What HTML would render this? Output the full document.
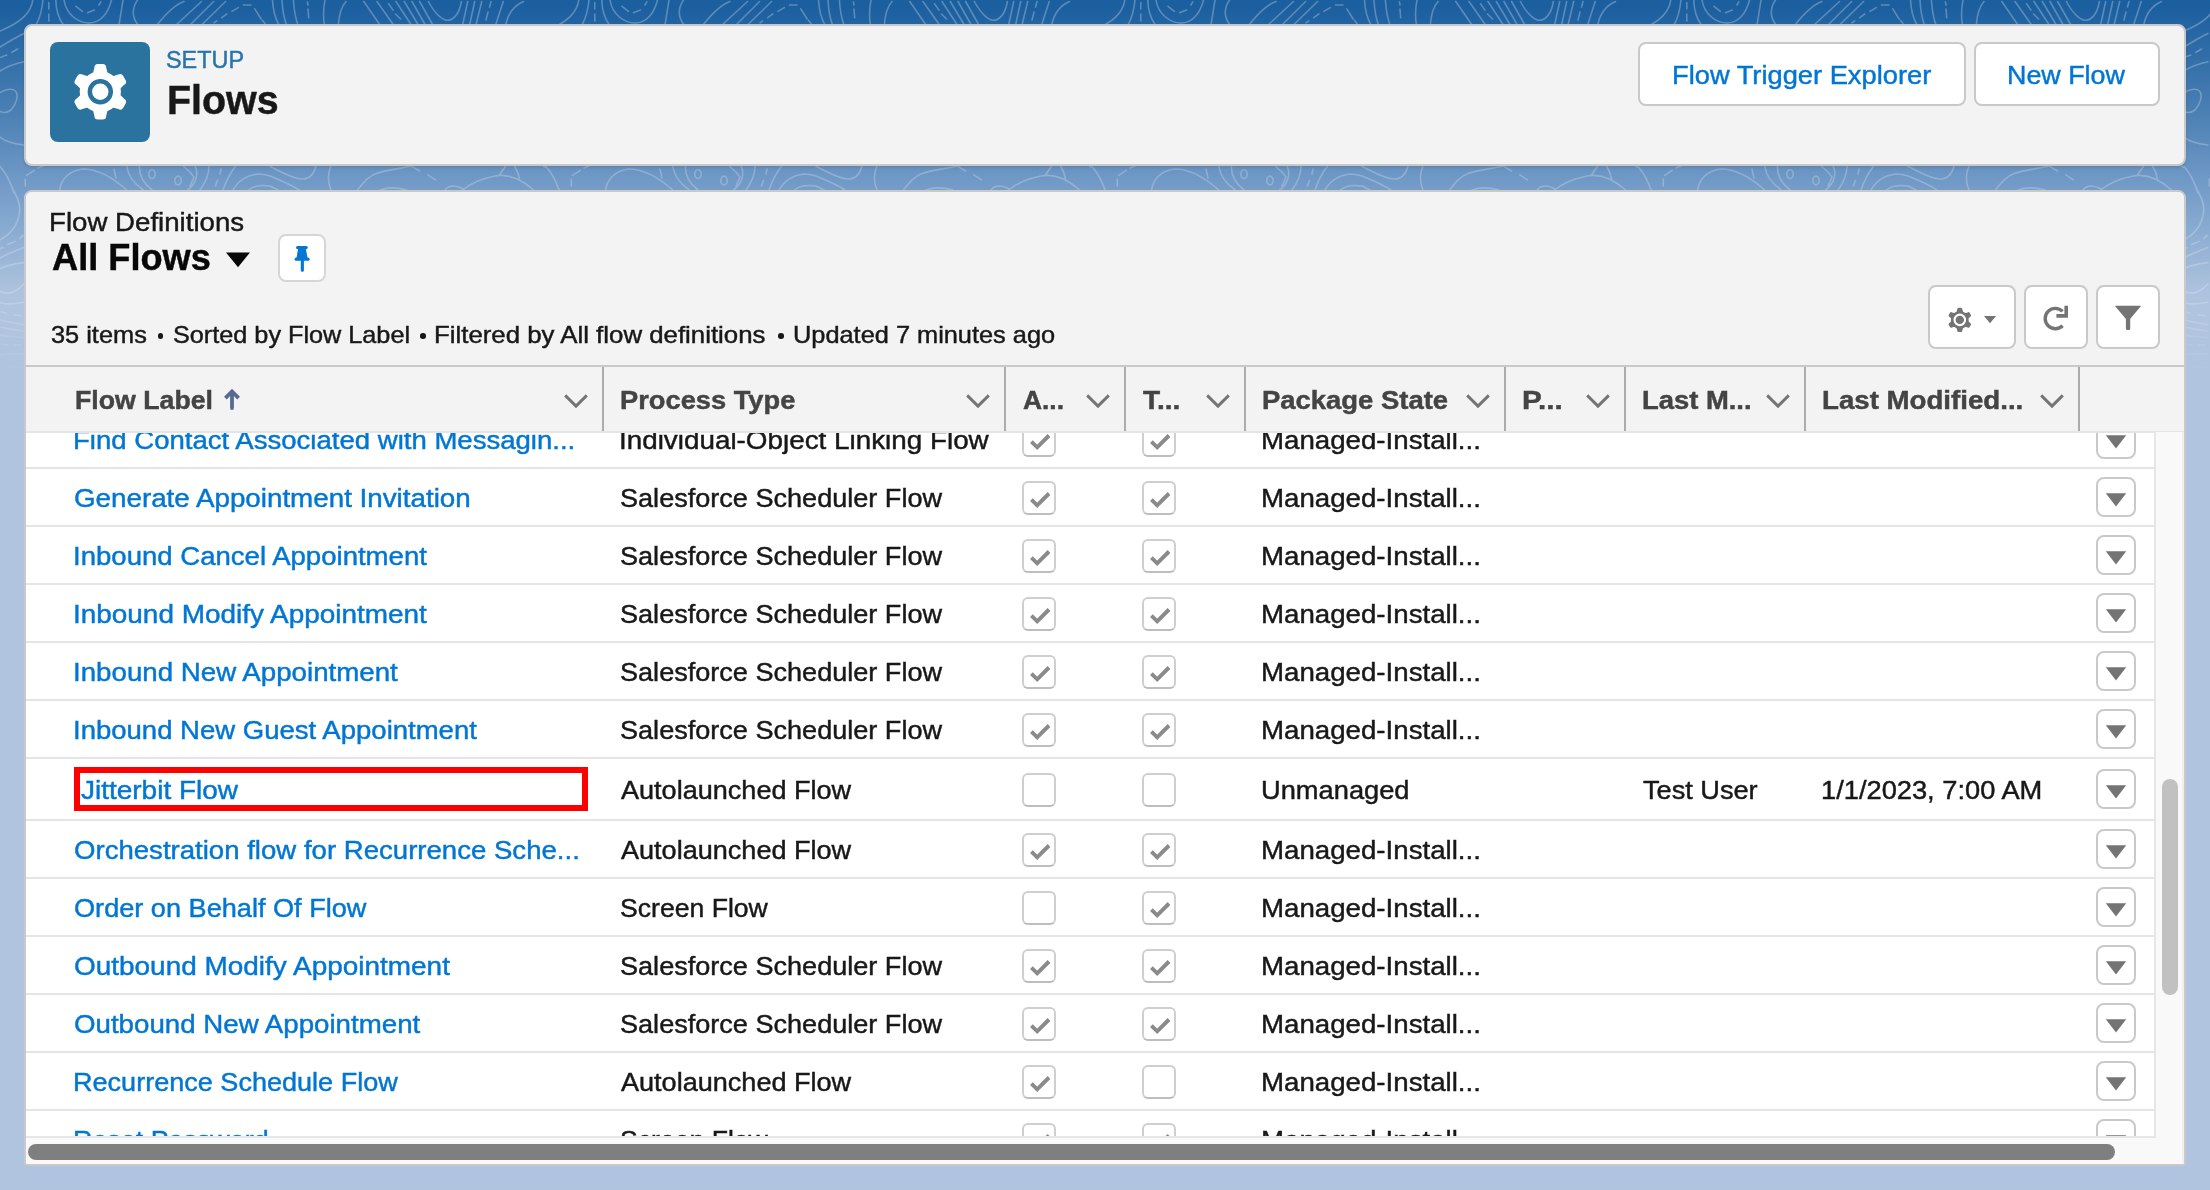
<!DOCTYPE html>
<html><head><meta charset="utf-8"><title>Flows | Setup</title>
<style>
*{box-sizing:border-box;margin:0;padding:0}
html,body{width:2210px;height:1190px;overflow:hidden}
body{position:relative;font-family:"Liberation Sans",sans-serif;background:#b0c4df linear-gradient(180deg,#1c5f9f 0px,#1c5f9f 8px,#4a7fb3 110px,#5285b7 126px,#7099c6 180px,#84a8cf 220px,#adc2de 290px,#b0c4df 310px,#b0c4df 100%) no-repeat;}
.topo{position:absolute;left:0;top:0;width:2210px;height:400px}
.card{position:absolute;left:24px;width:2162px;background:#f3f3f3;border:2px solid #c9c9c9;border-radius:8px;box-shadow:0 2px 3px rgba(0,0,0,.10)}
.tx{position:absolute;line-height:0;white-space:nowrap;transform-origin:0 0;-webkit-text-stroke:0.45px currentColor}
.btn{position:absolute;background:#fff;border:2px solid #c9c9c9;border-radius:8px}
.gearbox{position:absolute;left:50px;top:42px;width:100px;height:100px;background:#2b739f;border-radius:8px}
.thead{position:absolute;left:26px;top:365px;width:2158px;height:68px;background:#f3f3f3;border-top:2px solid #c9c9c9;border-bottom:2px solid #e5e5e5}
.dv{position:absolute;top:367px;width:2px;height:64px;background:#acacac}
.chev{position:absolute;top:393px}
.bodyclip{position:absolute;left:0;top:0;width:2210px;height:1190px;clip:rect(433px,2154px,1136px,26px)}
.tbody{position:absolute;left:26px;top:432px;width:2128px;height:704px;background:#fff}
.rl{position:absolute;left:26px;width:2128px;height:2px;background:#e5e5e5}
.cb{position:absolute;width:34px;height:34px;border:2px solid #cfcfcf;border-bottom-color:#bdbdbd;border-radius:6px;background:#fff}
.cb svg{position:absolute;left:-2px;top:-2px}
.ab{position:absolute;left:2096px;width:40px;height:40px;border:2px solid #c9c9c9;border-radius:8px;background:#fff}
.ab svg{position:absolute;left:-2px;top:-2px}
</style></head>
<body>
<svg class="topo" width="2210" height="400" viewBox="0 0 2210 400">
<defs>
<pattern id="tp" x="0" y="0" width="546" height="400" patternUnits="userSpaceOnUse"><path d="M33 -2 C32 12 22 22 0 31 M43 0 C42 10 40 18 36 25 M48.8 2.5 V9 M48.8 14 V21 M55.8 0 C56 12 59 19 63.4 25 M64 0 C66 14 78 23 89 23 C100 23 108 14 111.5 0 M76 6.3 L82.4 11.4 M87.5 12.7 L94.4 10.1 M98.9 5 L100.8 1.9 M123 0 L119 25 M137.5 0 C132 8 132 17 138 25 M184 1.5 C177 4 168 11 157 25 M201.5 1.5 L176 25 M213.6 1.5 L190 25 M225.6 1.5 L201.5 25 M214 22.8 L216.7 20.9 M221.8 17.7 L226.9 13.9 M231.9 11.4 L238.3 7.6 M243.4 5 L251 5 M254.8 8.9 L261.1 19 M262.4 20.3 L265 23.4 M272.5 0 C273 10 275 18 279 25 M282 0 C282.5 10 283.5 17 286.5 25 M293.4 0 C294 10 295 17 298 25 M307.4 2 L308 5 M308 9 L308.7 17.7 M325 0 C323 10 323 17 324.5 25 M346 1.5 C342 6 339 14 338.4 25 M363.8 1.5 L380 25 M377 1.5 L393.6 25 M388.5 3.8 L393 10.1 M395.5 14 L400.5 19 M396 1.5 L411.3 25 M404.3 1.5 L418.3 25 M412 1.5 L425.3 25 M419.6 1.5 L432.9 25 M428.4 1.5 C436 16 444 20.3 447.4 20.3 C452 20.3 459 16 461.4 1.5 M467.7 1.5 L462.6 25 M474.7 1.5 L469.6 25 M481.7 1.5 L476 25 M491 1.5 L489.5 7 M488 12 L486 20 M503.2 1.5 L495.6 25 M523.5 1.5 C513 6 508 14 505.7 25 M0 166.5 C5 172 10 180 14 193 M26.6 175.4 L34.2 170.3 M38 168 L43 166 M25.3 179 V186 M59.6 190 C61 180 68 171 82.4 169 C95 169 110 175 126.7 190 M114 169 L116 178 M126.7 166 C128 175 133 183 143.2 190 M139.4 166 C139 175 143 183 152 190 M148.8 174.1 A3.2 4.4 0 1 0 155.2 174.1 A3.2 4.4 0 1 0 148.8 174.1 M174.8 180.5 A3.2 4.4 0 1 0 181.2 180.5 A3.2 4.4 0 1 0 174.8 180.5 M183.8 166.5 L190 172 L194 177 L190 186 M195 166 C198 172 198 182 187.6 190 M209 166 C209 175 206 182 200 190 M221 169 L220 174 M217.4 180.5 L215.5 186 M235.7 166 C231 172 226 181 223 190 M233 190 C238 181 247 175.4 258 174 C263 174 267 175 270 176 M248.4 190 C252 187 258 185.5 263 185.5 C266 185.5 268 185.7 270 186 M270 166.5 C278 170 292 179 302 179 C309 179 314 174 316 166 M270 176 C280 180 290 184 299 190 M270 186 L278 190 M331 166 C327.5 174 327.5 182 331 190 M357.5 190 C362 184 367 177 375 174 C385 170 397 169 412 166 M412 166.5 L419.6 171 M427.8 174.8 L435.4 179.8 M380 190 C388 187 396 187 407 190 M445 190 C447 187 451 186 454 186 C458 186 461 188 463 189 M462.6 190 C470 184 480 179 495 176 C505 174 518 176 533.6 190 M499.4 175 L505.7 166 M514.6 166 C517 170 519 175 519.7 180 M543.8 166.5 L550 169 M0 47 C8 42 16 37 24 33.4 M0 57.6 L6.7 55 M12 52.3 L17.5 49 M0 71 C6 67 13 64 24 61.7 M0 92.6 C5 90 12 88 15.5 91 C19 95 16 105 11 110 C7 113 3 113 0 111.4 M0 137 C3 140 8 143 24 145 M12.1 188 C17 196 20 205 19.7 210 C19 222 14 232 0 240 M0 249 L3 247.5 M7.6 244.5 L15 241.4 M19.7 238.4 L23.4 235.4 M0 258 C5 255 12 252 24 247.5 M0 268.7 C5 266 12 264 24 262.6 M0 291.4 C4 293 9 294 13 292 C18 290 21 287 24 283.8 M0 302.7 C5 304 12 305 24 302 M1.5 311.8 L6 313.3 M13.6 314.8 L20.4 315.6 M0 320 C5 321 12 323 24 324.6 M0 327 C5 328 12 330 24 330.7 M0 335 C5 336 12 336.7 24 337.5 M1.5 344.3 L7.6 345 M14.4 345 L21 345 M0 355 C5 354 12 353.4 24 354 M7.6 367 L24 367.7" fill="none" stroke="#fff" stroke-width="1.6" stroke-linecap="round"/></pattern>
<linearGradient id="tg" x1="0" y1="0" x2="0" y2="1"><stop offset="0" stop-color="#fff" stop-opacity="1"/><stop offset="0.75" stop-color="#fff" stop-opacity="0.75"/><stop offset="0.95" stop-color="#fff" stop-opacity="0"/></linearGradient>
<mask id="tm"><rect width="2210" height="400" fill="url(#tg)"/></mask>
</defs>
<rect width="2210" height="400" fill="url(#tp)" opacity="0.27" mask="url(#tm)"/>
</svg>

<div class="card" style="top:24px;height:142px"></div>
<div class="gearbox"><svg width="100" height="100" viewBox="0 0 100 100"><circle cx="50.3" cy="49.8" r="20.60" fill="#fff"/><path d="M42.70 32.80 L44.40 25.60 Q44.40 22.00 48.00 22.00 L52.60 22.00 Q56.20 22.00 56.20 25.60 L57.90 32.80 Z" fill="#fff" transform="rotate(0 50.3 49.8)"/><path d="M42.70 32.80 L44.40 25.60 Q44.40 22.00 48.00 22.00 L52.60 22.00 Q56.20 22.00 56.20 25.60 L57.90 32.80 Z" fill="#fff" transform="rotate(60 50.3 49.8)"/><path d="M42.70 32.80 L44.40 25.60 Q44.40 22.00 48.00 22.00 L52.60 22.00 Q56.20 22.00 56.20 25.60 L57.90 32.80 Z" fill="#fff" transform="rotate(120 50.3 49.8)"/><path d="M42.70 32.80 L44.40 25.60 Q44.40 22.00 48.00 22.00 L52.60 22.00 Q56.20 22.00 56.20 25.60 L57.90 32.80 Z" fill="#fff" transform="rotate(180 50.3 49.8)"/><path d="M42.70 32.80 L44.40 25.60 Q44.40 22.00 48.00 22.00 L52.60 22.00 Q56.20 22.00 56.20 25.60 L57.90 32.80 Z" fill="#fff" transform="rotate(240 50.3 49.8)"/><path d="M42.70 32.80 L44.40 25.60 Q44.40 22.00 48.00 22.00 L52.60 22.00 Q56.20 22.00 56.20 25.60 L57.90 32.80 Z" fill="#fff" transform="rotate(300 50.3 49.8)"/><circle cx="50.3" cy="49.8" r="12.70" fill="#2b739f"/><circle cx="50.3" cy="49.8" r="8.20" fill="#fff"/></svg></div>
<div class="btn" style="left:1638px;top:42px;width:328px;height:64px"></div>
<div class="btn" style="left:1974px;top:42px;width:186px;height:64px"></div>

<div class="card" style="top:190px;height:976px;background:#f9f9f9;border-radius:8px 8px 3px 3px;box-shadow:none"></div>
<div style="position:absolute;left:26px;top:192px;width:2158px;height:173px;background:#f3f3f3;border-radius:6px 6px 0 0"></div>
<div class="btn" style="left:278px;top:234px;width:48px;height:48px;border-color:#d8d6d4"></div>
<svg style="position:absolute;left:226px;top:252px" width="24" height="16" viewBox="0 0 24 16"><path d="M0 0.5 H24 L12 15.2 Z" fill="#080808"/></svg>
<svg style="position:absolute;left:290px;top:244px" width="24" height="30" viewBox="0 0 24 30"><g fill="#0176d3"><rect x="6" y="2" width="11.8" height="3.2" rx="1.6"/><path d="M8.2 4.5 H15.8 L17.6 14 H6.5 Z"/><rect x="4.6" y="13.6" width="15" height="3.2" rx="1.6"/><rect x="10.8" y="15" width="3.1" height="12.8" rx="1.55"/></g></svg>

<div class="btn" style="left:1928px;top:285px;width:88px;height:64px"></div>
<div class="btn" style="left:2024px;top:285px;width:64px;height:64px"></div>
<div class="btn" style="left:2096px;top:285px;width:64px;height:64px"></div>
<svg style="position:absolute;left:0;top:0" width="2210" height="400" viewBox="0 0 2210 400">
<circle cx="1959.8" cy="319.9" r="8.97" fill="#747474"/><path d="M1956.49 312.50 L1957.23 309.37 Q1957.23 307.80 1958.80 307.80 L1960.80 307.80 Q1962.37 307.80 1962.37 309.37 L1963.11 312.50 Z" fill="#747474" transform="rotate(0 1959.8 319.9)"/><path d="M1956.49 312.50 L1957.23 309.37 Q1957.23 307.80 1958.80 307.80 L1960.80 307.80 Q1962.37 307.80 1962.37 309.37 L1963.11 312.50 Z" fill="#747474" transform="rotate(60 1959.8 319.9)"/><path d="M1956.49 312.50 L1957.23 309.37 Q1957.23 307.80 1958.80 307.80 L1960.80 307.80 Q1962.37 307.80 1962.37 309.37 L1963.11 312.50 Z" fill="#747474" transform="rotate(120 1959.8 319.9)"/><path d="M1956.49 312.50 L1957.23 309.37 Q1957.23 307.80 1958.80 307.80 L1960.80 307.80 Q1962.37 307.80 1962.37 309.37 L1963.11 312.50 Z" fill="#747474" transform="rotate(180 1959.8 319.9)"/><path d="M1956.49 312.50 L1957.23 309.37 Q1957.23 307.80 1958.80 307.80 L1960.80 307.80 Q1962.37 307.80 1962.37 309.37 L1963.11 312.50 Z" fill="#747474" transform="rotate(240 1959.8 319.9)"/><path d="M1956.49 312.50 L1957.23 309.37 Q1957.23 307.80 1958.80 307.80 L1960.80 307.80 Q1962.37 307.80 1962.37 309.37 L1963.11 312.50 Z" fill="#747474" transform="rotate(300 1959.8 319.9)"/><circle cx="1959.8" cy="319.9" r="6.30" fill="#fff"/><circle cx="1959.8" cy="319.9" r="4.20" fill="#747474"/>
<path d="M1984 316 H1996 L1990 323.2 Z" fill="#747474"/>
<path d="M2062.6 311.4 A10.2 10.2 0 1 0 2062.6 325.8" fill="none" stroke="#747474" stroke-width="3.4"/>
<path d="M2056.4 315.9 H2066.2 V305.8" fill="none" stroke="#747474" stroke-width="3.6"/>
<path d="M2114.8 305.7 H2141.2 L2128 321.6 Z" fill="#747474"/>
<rect x="2125.9" y="314" width="4.3" height="16" rx="1.5" fill="#747474"/>
</svg>

<div class="thead"></div>
<div class="dv" style="left:602px"></div><div class="dv" style="left:1004px"></div><div class="dv" style="left:1124px"></div><div class="dv" style="left:1244px"></div><div class="dv" style="left:1504px"></div><div class="dv" style="left:1624px"></div><div class="dv" style="left:1804px"></div><div class="dv" style="left:2078px"></div>
<svg class="chev" style="left:564px" width="24" height="16" viewBox="0 0 24 16"><path d="M1.2 2.4 L12 13.1 L22.8 2.4" fill="none" stroke="#747474" stroke-width="2.9"/></svg><svg class="chev" style="left:966px" width="24" height="16" viewBox="0 0 24 16"><path d="M1.2 2.4 L12 13.1 L22.8 2.4" fill="none" stroke="#747474" stroke-width="2.9"/></svg><svg class="chev" style="left:1086px" width="24" height="16" viewBox="0 0 24 16"><path d="M1.2 2.4 L12 13.1 L22.8 2.4" fill="none" stroke="#747474" stroke-width="2.9"/></svg><svg class="chev" style="left:1206px" width="24" height="16" viewBox="0 0 24 16"><path d="M1.2 2.4 L12 13.1 L22.8 2.4" fill="none" stroke="#747474" stroke-width="2.9"/></svg><svg class="chev" style="left:1466px" width="24" height="16" viewBox="0 0 24 16"><path d="M1.2 2.4 L12 13.1 L22.8 2.4" fill="none" stroke="#747474" stroke-width="2.9"/></svg><svg class="chev" style="left:1586px" width="24" height="16" viewBox="0 0 24 16"><path d="M1.2 2.4 L12 13.1 L22.8 2.4" fill="none" stroke="#747474" stroke-width="2.9"/></svg><svg class="chev" style="left:1766px" width="24" height="16" viewBox="0 0 24 16"><path d="M1.2 2.4 L12 13.1 L22.8 2.4" fill="none" stroke="#747474" stroke-width="2.9"/></svg><svg class="chev" style="left:2040px" width="24" height="16" viewBox="0 0 24 16"><path d="M1.2 2.4 L12 13.1 L22.8 2.4" fill="none" stroke="#747474" stroke-width="2.9"/></svg>
<svg style="position:absolute;left:0;top:0" width="300" height="420" viewBox="0 0 300 420"><path d="M232 393 V408" stroke="#566a93" stroke-width="3.8" stroke-linecap="round"/><path d="M225.4 398.1 L232 391.5 L238.6 398.1" fill="none" stroke="#566a93" stroke-width="3.8" stroke-linejoin="miter"/></svg>

<div class="bodyclip">
<div class="tbody"></div>
<div class="rl" style="top:467px"></div><div class="rl" style="top:525px"></div><div class="rl" style="top:583px"></div><div class="rl" style="top:641px"></div><div class="rl" style="top:699px"></div><div class="rl" style="top:757px"></div><div class="rl" style="top:819px"></div><div class="rl" style="top:877px"></div><div class="rl" style="top:935px"></div><div class="rl" style="top:993px"></div><div class="rl" style="top:1051px"></div><div class="rl" style="top:1109px"></div>
<span class="tx" style="left:72.88px;top:439.70px;font-size:26px;font-weight:400;color:#0176d3;transform:scaleX(1.0596)">Find Contact Associated with Messagin...</span>
<span class="tx" style="left:619.06px;top:439.70px;font-size:26px;font-weight:400;color:#181818;transform:scaleX(1.0704)">Individual-Object Linking Flow</span>
<span class="tx" style="left:1261.17px;top:439.70px;font-size:26px;font-weight:400;color:#181818;transform:scaleX(1.0640)">Managed-Install...</span>
<span class="tx" style="left:73.93px;top:497.70px;font-size:26px;font-weight:400;color:#0176d3;transform:scaleX(1.0679)">Generate Appointment Invitation</span>
<span class="tx" style="left:620.16px;top:497.70px;font-size:26px;font-weight:400;color:#181818;transform:scaleX(1.0412)">Salesforce Scheduler Flow</span>
<span class="tx" style="left:1261.17px;top:497.70px;font-size:26px;font-weight:400;color:#181818;transform:scaleX(1.0640)">Managed-Install...</span>
<span class="tx" style="left:72.88px;top:555.70px;font-size:26px;font-weight:400;color:#0176d3;transform:scaleX(1.0598)">Inbound Cancel Appointment</span>
<span class="tx" style="left:620.16px;top:555.70px;font-size:26px;font-weight:400;color:#181818;transform:scaleX(1.0412)">Salesforce Scheduler Flow</span>
<span class="tx" style="left:1261.17px;top:555.70px;font-size:26px;font-weight:400;color:#181818;transform:scaleX(1.0640)">Managed-Install...</span>
<span class="tx" style="left:72.85px;top:613.70px;font-size:26px;font-weight:400;color:#0176d3;transform:scaleX(1.0738)">Inbound Modify Appointment</span>
<span class="tx" style="left:620.16px;top:613.70px;font-size:26px;font-weight:400;color:#181818;transform:scaleX(1.0412)">Salesforce Scheduler Flow</span>
<span class="tx" style="left:1261.17px;top:613.70px;font-size:26px;font-weight:400;color:#181818;transform:scaleX(1.0640)">Managed-Install...</span>
<span class="tx" style="left:72.87px;top:671.70px;font-size:26px;font-weight:400;color:#0176d3;transform:scaleX(1.0649)">Inbound New Appointment</span>
<span class="tx" style="left:620.16px;top:671.70px;font-size:26px;font-weight:400;color:#181818;transform:scaleX(1.0412)">Salesforce Scheduler Flow</span>
<span class="tx" style="left:1261.17px;top:671.70px;font-size:26px;font-weight:400;color:#181818;transform:scaleX(1.0640)">Managed-Install...</span>
<span class="tx" style="left:72.88px;top:729.70px;font-size:26px;font-weight:400;color:#0176d3;transform:scaleX(1.0584)">Inbound New Guest Appointment</span>
<span class="tx" style="left:620.16px;top:729.70px;font-size:26px;font-weight:400;color:#181818;transform:scaleX(1.0412)">Salesforce Scheduler Flow</span>
<span class="tx" style="left:1261.17px;top:729.70px;font-size:26px;font-weight:400;color:#181818;transform:scaleX(1.0640)">Managed-Install...</span>
<span class="tx" style="left:81.00px;top:789.70px;font-size:26px;font-weight:400;color:#0176d3;transform:scaleX(1.0757)">Jitterbit Flow</span>
<span class="tx" style="left:621.20px;top:789.70px;font-size:26px;font-weight:400;color:#181818;transform:scaleX(1.0408)">Autolaunched Flow</span>
<span class="tx" style="left:1261.20px;top:789.70px;font-size:26px;font-weight:400;color:#181818;transform:scaleX(1.0485)">Unmanaged</span>
<span class="tx" style="left:1643.00px;top:789.70px;font-size:26px;font-weight:400;color:#181818;transform:scaleX(1.0441)">Test User</span>
<span class="tx" style="left:1821.15px;top:789.70px;font-size:26px;font-weight:400;color:#181818;transform:scaleX(1.0485)">1/1/2023, 7:00 AM</span>
<span class="tx" style="left:73.94px;top:849.70px;font-size:26px;font-weight:400;color:#0176d3;transform:scaleX(1.0607)">Orchestration flow for Recurrence Sche...</span>
<span class="tx" style="left:621.20px;top:849.70px;font-size:26px;font-weight:400;color:#181818;transform:scaleX(1.0408)">Autolaunched Flow</span>
<span class="tx" style="left:1261.17px;top:849.70px;font-size:26px;font-weight:400;color:#181818;transform:scaleX(1.0640)">Managed-Install...</span>
<span class="tx" style="left:73.96px;top:907.70px;font-size:26px;font-weight:400;color:#0176d3;transform:scaleX(1.0431)">Order on Behalf Of Flow</span>
<span class="tx" style="left:620.18px;top:907.70px;font-size:26px;font-weight:400;color:#181818;transform:scaleX(1.0228)">Screen Flow</span>
<span class="tx" style="left:1261.17px;top:907.70px;font-size:26px;font-weight:400;color:#181818;transform:scaleX(1.0640)">Managed-Install...</span>
<span class="tx" style="left:73.93px;top:965.70px;font-size:26px;font-weight:400;color:#0176d3;transform:scaleX(1.0747)">Outbound Modify Appointment</span>
<span class="tx" style="left:620.16px;top:965.70px;font-size:26px;font-weight:400;color:#181818;transform:scaleX(1.0412)">Salesforce Scheduler Flow</span>
<span class="tx" style="left:1261.17px;top:965.70px;font-size:26px;font-weight:400;color:#181818;transform:scaleX(1.0640)">Managed-Install...</span>
<span class="tx" style="left:73.94px;top:1023.70px;font-size:26px;font-weight:400;color:#0176d3;transform:scaleX(1.0646)">Outbound New Appointment</span>
<span class="tx" style="left:620.16px;top:1023.70px;font-size:26px;font-weight:400;color:#181818;transform:scaleX(1.0412)">Salesforce Scheduler Flow</span>
<span class="tx" style="left:1261.17px;top:1023.70px;font-size:26px;font-weight:400;color:#181818;transform:scaleX(1.0640)">Managed-Install...</span>
<span class="tx" style="left:72.92px;top:1081.70px;font-size:26px;font-weight:400;color:#0176d3;transform:scaleX(1.0404)">Recurrence Schedule Flow</span>
<span class="tx" style="left:621.20px;top:1081.70px;font-size:26px;font-weight:400;color:#181818;transform:scaleX(1.0408)">Autolaunched Flow</span>
<span class="tx" style="left:1261.17px;top:1081.70px;font-size:26px;font-weight:400;color:#181818;transform:scaleX(1.0640)">Managed-Install...</span>
<span class="tx" style="left:72.93px;top:1139.70px;font-size:26px;font-weight:400;color:#0176d3;transform:scaleX(1.0331)">Reset Password</span>
<span class="tx" style="left:620.18px;top:1139.70px;font-size:26px;font-weight:400;color:#181818;transform:scaleX(1.0228)">Screen Flow</span>
<span class="tx" style="left:1261.17px;top:1139.70px;font-size:26px;font-weight:400;color:#181818;transform:scaleX(1.0640)">Managed-Install...</span>
<div class="cb" style="left:1022px;top:423.3px"><svg width="34" height="34" viewBox="0 0 34 34"><path d="M9.4 18.6 L15.2 24.3 L27 12.5" fill="none" stroke="#8a8a8a" stroke-width="3.9" stroke-linecap="butt" stroke-linejoin="miter"/></svg></div>
<div class="cb" style="left:1142px;top:423.3px"><svg width="34" height="34" viewBox="0 0 34 34"><path d="M9.4 18.6 L15.2 24.3 L27 12.5" fill="none" stroke="#8a8a8a" stroke-width="3.9" stroke-linecap="butt" stroke-linejoin="miter"/></svg></div>
<div class="ab" style="top:419.0px"><svg width="40" height="40" viewBox="0 0 40 40"><path d="M9.8 16.2 H30.2 L20 29.4 Z" fill="#747474"/></svg></div>
<div class="cb" style="left:1022px;top:481.3px"><svg width="34" height="34" viewBox="0 0 34 34"><path d="M9.4 18.6 L15.2 24.3 L27 12.5" fill="none" stroke="#8a8a8a" stroke-width="3.9" stroke-linecap="butt" stroke-linejoin="miter"/></svg></div>
<div class="cb" style="left:1142px;top:481.3px"><svg width="34" height="34" viewBox="0 0 34 34"><path d="M9.4 18.6 L15.2 24.3 L27 12.5" fill="none" stroke="#8a8a8a" stroke-width="3.9" stroke-linecap="butt" stroke-linejoin="miter"/></svg></div>
<div class="ab" style="top:477.0px"><svg width="40" height="40" viewBox="0 0 40 40"><path d="M9.8 16.2 H30.2 L20 29.4 Z" fill="#747474"/></svg></div>
<div class="cb" style="left:1022px;top:539.3px"><svg width="34" height="34" viewBox="0 0 34 34"><path d="M9.4 18.6 L15.2 24.3 L27 12.5" fill="none" stroke="#8a8a8a" stroke-width="3.9" stroke-linecap="butt" stroke-linejoin="miter"/></svg></div>
<div class="cb" style="left:1142px;top:539.3px"><svg width="34" height="34" viewBox="0 0 34 34"><path d="M9.4 18.6 L15.2 24.3 L27 12.5" fill="none" stroke="#8a8a8a" stroke-width="3.9" stroke-linecap="butt" stroke-linejoin="miter"/></svg></div>
<div class="ab" style="top:535.0px"><svg width="40" height="40" viewBox="0 0 40 40"><path d="M9.8 16.2 H30.2 L20 29.4 Z" fill="#747474"/></svg></div>
<div class="cb" style="left:1022px;top:597.3px"><svg width="34" height="34" viewBox="0 0 34 34"><path d="M9.4 18.6 L15.2 24.3 L27 12.5" fill="none" stroke="#8a8a8a" stroke-width="3.9" stroke-linecap="butt" stroke-linejoin="miter"/></svg></div>
<div class="cb" style="left:1142px;top:597.3px"><svg width="34" height="34" viewBox="0 0 34 34"><path d="M9.4 18.6 L15.2 24.3 L27 12.5" fill="none" stroke="#8a8a8a" stroke-width="3.9" stroke-linecap="butt" stroke-linejoin="miter"/></svg></div>
<div class="ab" style="top:593.0px"><svg width="40" height="40" viewBox="0 0 40 40"><path d="M9.8 16.2 H30.2 L20 29.4 Z" fill="#747474"/></svg></div>
<div class="cb" style="left:1022px;top:655.3px"><svg width="34" height="34" viewBox="0 0 34 34"><path d="M9.4 18.6 L15.2 24.3 L27 12.5" fill="none" stroke="#8a8a8a" stroke-width="3.9" stroke-linecap="butt" stroke-linejoin="miter"/></svg></div>
<div class="cb" style="left:1142px;top:655.3px"><svg width="34" height="34" viewBox="0 0 34 34"><path d="M9.4 18.6 L15.2 24.3 L27 12.5" fill="none" stroke="#8a8a8a" stroke-width="3.9" stroke-linecap="butt" stroke-linejoin="miter"/></svg></div>
<div class="ab" style="top:651.0px"><svg width="40" height="40" viewBox="0 0 40 40"><path d="M9.8 16.2 H30.2 L20 29.4 Z" fill="#747474"/></svg></div>
<div class="cb" style="left:1022px;top:713.3px"><svg width="34" height="34" viewBox="0 0 34 34"><path d="M9.4 18.6 L15.2 24.3 L27 12.5" fill="none" stroke="#8a8a8a" stroke-width="3.9" stroke-linecap="butt" stroke-linejoin="miter"/></svg></div>
<div class="cb" style="left:1142px;top:713.3px"><svg width="34" height="34" viewBox="0 0 34 34"><path d="M9.4 18.6 L15.2 24.3 L27 12.5" fill="none" stroke="#8a8a8a" stroke-width="3.9" stroke-linecap="butt" stroke-linejoin="miter"/></svg></div>
<div class="ab" style="top:709.0px"><svg width="40" height="40" viewBox="0 0 40 40"><path d="M9.8 16.2 H30.2 L20 29.4 Z" fill="#747474"/></svg></div>
<div class="cb" style="left:1022px;top:773.3px"></div>
<div class="cb" style="left:1142px;top:773.3px"></div>
<div class="ab" style="top:769.0px"><svg width="40" height="40" viewBox="0 0 40 40"><path d="M9.8 16.2 H30.2 L20 29.4 Z" fill="#747474"/></svg></div>
<div class="cb" style="left:1022px;top:833.3px"><svg width="34" height="34" viewBox="0 0 34 34"><path d="M9.4 18.6 L15.2 24.3 L27 12.5" fill="none" stroke="#8a8a8a" stroke-width="3.9" stroke-linecap="butt" stroke-linejoin="miter"/></svg></div>
<div class="cb" style="left:1142px;top:833.3px"><svg width="34" height="34" viewBox="0 0 34 34"><path d="M9.4 18.6 L15.2 24.3 L27 12.5" fill="none" stroke="#8a8a8a" stroke-width="3.9" stroke-linecap="butt" stroke-linejoin="miter"/></svg></div>
<div class="ab" style="top:829.0px"><svg width="40" height="40" viewBox="0 0 40 40"><path d="M9.8 16.2 H30.2 L20 29.4 Z" fill="#747474"/></svg></div>
<div class="cb" style="left:1022px;top:891.3px"></div>
<div class="cb" style="left:1142px;top:891.3px"><svg width="34" height="34" viewBox="0 0 34 34"><path d="M9.4 18.6 L15.2 24.3 L27 12.5" fill="none" stroke="#8a8a8a" stroke-width="3.9" stroke-linecap="butt" stroke-linejoin="miter"/></svg></div>
<div class="ab" style="top:887.0px"><svg width="40" height="40" viewBox="0 0 40 40"><path d="M9.8 16.2 H30.2 L20 29.4 Z" fill="#747474"/></svg></div>
<div class="cb" style="left:1022px;top:949.3px"><svg width="34" height="34" viewBox="0 0 34 34"><path d="M9.4 18.6 L15.2 24.3 L27 12.5" fill="none" stroke="#8a8a8a" stroke-width="3.9" stroke-linecap="butt" stroke-linejoin="miter"/></svg></div>
<div class="cb" style="left:1142px;top:949.3px"><svg width="34" height="34" viewBox="0 0 34 34"><path d="M9.4 18.6 L15.2 24.3 L27 12.5" fill="none" stroke="#8a8a8a" stroke-width="3.9" stroke-linecap="butt" stroke-linejoin="miter"/></svg></div>
<div class="ab" style="top:945.0px"><svg width="40" height="40" viewBox="0 0 40 40"><path d="M9.8 16.2 H30.2 L20 29.4 Z" fill="#747474"/></svg></div>
<div class="cb" style="left:1022px;top:1007.3px"><svg width="34" height="34" viewBox="0 0 34 34"><path d="M9.4 18.6 L15.2 24.3 L27 12.5" fill="none" stroke="#8a8a8a" stroke-width="3.9" stroke-linecap="butt" stroke-linejoin="miter"/></svg></div>
<div class="cb" style="left:1142px;top:1007.3px"><svg width="34" height="34" viewBox="0 0 34 34"><path d="M9.4 18.6 L15.2 24.3 L27 12.5" fill="none" stroke="#8a8a8a" stroke-width="3.9" stroke-linecap="butt" stroke-linejoin="miter"/></svg></div>
<div class="ab" style="top:1003.0px"><svg width="40" height="40" viewBox="0 0 40 40"><path d="M9.8 16.2 H30.2 L20 29.4 Z" fill="#747474"/></svg></div>
<div class="cb" style="left:1022px;top:1065.3px"><svg width="34" height="34" viewBox="0 0 34 34"><path d="M9.4 18.6 L15.2 24.3 L27 12.5" fill="none" stroke="#8a8a8a" stroke-width="3.9" stroke-linecap="butt" stroke-linejoin="miter"/></svg></div>
<div class="cb" style="left:1142px;top:1065.3px"></div>
<div class="ab" style="top:1061.0px"><svg width="40" height="40" viewBox="0 0 40 40"><path d="M9.8 16.2 H30.2 L20 29.4 Z" fill="#747474"/></svg></div>
<div class="cb" style="left:1022px;top:1123.3px"><svg width="34" height="34" viewBox="0 0 34 34"><path d="M9.4 18.6 L15.2 24.3 L27 12.5" fill="none" stroke="#8a8a8a" stroke-width="3.9" stroke-linecap="butt" stroke-linejoin="miter"/></svg></div>
<div class="cb" style="left:1142px;top:1123.3px"><svg width="34" height="34" viewBox="0 0 34 34"><path d="M9.4 18.6 L15.2 24.3 L27 12.5" fill="none" stroke="#8a8a8a" stroke-width="3.9" stroke-linecap="butt" stroke-linejoin="miter"/></svg></div>
<div class="ab" style="top:1119.0px"><svg width="40" height="40" viewBox="0 0 40 40"><path d="M9.8 16.2 H30.2 L20 29.4 Z" fill="#747474"/></svg></div>
<div style="position:absolute;left:74px;top:767px;width:514px;height:44px;border:6px solid #ff0000"></div>
</div>

<!-- scrollbars -->
<div style="position:absolute;left:2154px;top:432px;width:30px;height:705px;background:#f9f9f9;border-left:2px solid #e6e6e6"></div>
<div style="position:absolute;left:2182px;top:432px;width:2px;height:732px;background:#efefef"></div>
<div style="position:absolute;left:2162px;top:779px;width:16px;height:216px;background:#c1c1c1;border-radius:8px"></div>
<div style="position:absolute;left:26px;top:1136px;width:2130px;height:2px;background:#e6e6e6"></div>
<div style="position:absolute;left:28px;top:1144px;width:2087px;height:16px;background:#7f7f7f;border-radius:8px"></div>

<div style="position:absolute;left:157.75px;top:333.45px;width:5.5px;height:5.5px;border-radius:50%;background:#181818"></div><div style="position:absolute;left:420.25px;top:333.45px;width:5.5px;height:5.5px;border-radius:50%;background:#181818"></div><div style="position:absolute;left:778.15px;top:333.45px;width:5.5px;height:5.5px;border-radius:50%;background:#181818"></div>
<span class="tx" style="left:166.03px;top:59.53px;font-size:24.2px;font-weight:400;color:#2674ab;transform:scaleX(0.9681)">SETUP</span>
<span class="tx" style="left:167.07px;top:99.52px;font-size:40.8px;font-weight:700;color:#181818;transform:scaleX(0.9654)">Flows</span>
<span class="tx" style="left:1671.90px;top:74.90px;font-size:26px;font-weight:400;color:#0176d3;transform:scaleX(1.0493)">Flow Trigger Explorer</span>
<span class="tx" style="left:2006.94px;top:74.90px;font-size:26px;font-weight:400;color:#0176d3;transform:scaleX(1.0324)">New Flow</span>
<span class="tx" style="left:49.35px;top:222.00px;font-size:25.7px;font-weight:400;color:#181818;transform:scaleX(1.0764)">Flow Definitions</span>
<span class="tx" style="left:51.50px;top:257.53px;font-size:36.5px;font-weight:700;color:#080808;transform:scaleX(0.9912)">All Flows</span>
<span class="tx" style="left:51.30px;top:334.80px;font-size:24px;font-weight:400;color:#181818;transform:scaleX(1.0562)">35 items</span>
<span class="tx" style="left:172.55px;top:334.80px;font-size:24px;font-weight:400;color:#181818;transform:scaleX(1.0514)">Sorted by Flow Label</span>
<span class="tx" style="left:434.22px;top:334.80px;font-size:24px;font-weight:400;color:#181818;transform:scaleX(1.0756)">Filtered by All flow definitions</span>
<span class="tx" style="left:792.94px;top:334.80px;font-size:24px;font-weight:400;color:#181818;transform:scaleX(1.0562)">Updated 7 minutes ago</span>
<span class="tx" style="left:74.55px;top:400.07px;font-size:25.5px;font-weight:700;color:#444444;transform:scaleX(1.0472)">Flow Label</span>
<span class="tx" style="left:620.13px;top:400.07px;font-size:25.5px;font-weight:700;color:#444444;transform:scaleX(1.0697)">Process Type</span>
<span class="tx" style="left:1023.20px;top:400.07px;font-size:25.5px;font-weight:700;color:#444444;transform:scaleX(1.0341)">A...</span>
<span class="tx" style="left:1143.40px;top:400.07px;font-size:25.5px;font-weight:700;color:#444444;transform:scaleX(1.0997)">T...</span>
<span class="tx" style="left:1262.42px;top:400.07px;font-size:25.5px;font-weight:700;color:#444444;transform:scaleX(1.0760)">Package State</span>
<span class="tx" style="left:1522.44px;top:400.07px;font-size:25.5px;font-weight:700;color:#444444;transform:scaleX(1.1614)">P...</span>
<span class="tx" style="left:1642.33px;top:400.07px;font-size:25.5px;font-weight:700;color:#444444;transform:scaleX(1.0738)">Last M...</span>
<span class="tx" style="left:1822.12px;top:400.07px;font-size:25.5px;font-weight:700;color:#444444;transform:scaleX(1.0845)">Last Modified...</span>
</body></html>
